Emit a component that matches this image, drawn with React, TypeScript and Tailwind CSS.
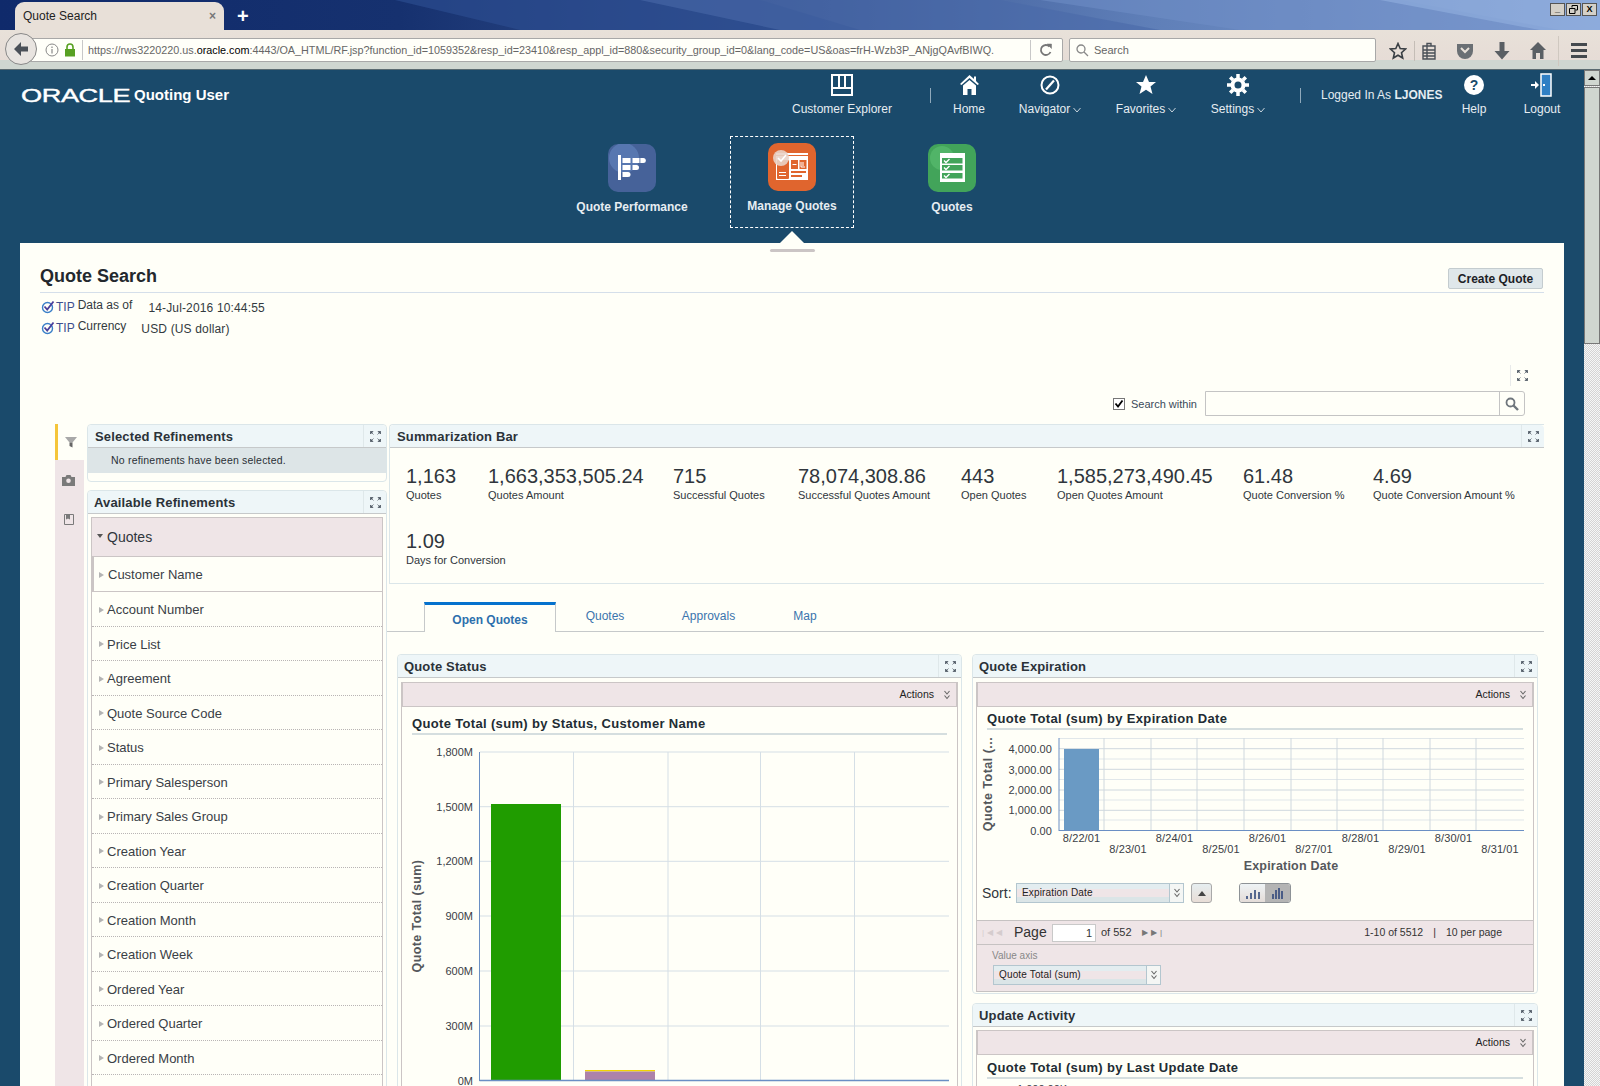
import type { ReactNode } from "react";

const metricsRow = [
  { value: "1,163", label: "Quotes", width: "w-[82px]" },
  { value: "1,663,353,505.24", label: "Quotes Amount", width: "w-[185px]" },
  { value: "715", label: "Successful Quotes", width: "w-[125px]" },
  { value: "78,074,308.86", label: "Successful Quotes Amount", width: "w-[163px]" },
  { value: "443", label: "Open Quotes", width: "w-[96px]" },
  { value: "1,585,273,490.45", label: "Open Quotes Amount", width: "w-[186px]" },
  { value: "61.48", label: "Quote Conversion %", width: "w-[130px]" },
  { value: "4.69", label: "Quote Conversion Amount %", width: "w-[166px]" },
  { value: "1.09", label: "Days for Conversion", width: "w-[200px]" },
];

const refinements = [
  "Account Number",
  "Price List",
  "Agreement",
  "Quote Source Code",
  "Status",
  "Primary Salesperson",
  "Primary Sales Group",
  "Creation Year",
  "Creation Quarter",
  "Creation Month",
  "Creation Week",
  "Ordered Year",
  "Ordered Quarter",
  "Ordered Month",
];

function ExpandIcon() {
  return (
    <svg width="11" height="11" viewBox="0 0 11 11" fill="#4a5560" stroke="#4a5560" strokeWidth="0.7">
      <path d="M0.5 0.5H3L0.5 3ZM0.5 0.5L3.500 3.500M10.500 0.500H8L10.500 3ZM10.500 0.500L7.500 3.500M0.500 10.500H3L0.500 8ZM0.500 10.500L3.500 7.500M10.500 10.500H8L10.500 8ZM10.500 10.500L7.500 7.500" />
    </svg>
  );
}

function DoubleChevron() {
  return (
    <svg width="8" height="10" viewBox="0 0 8 10" fill="none" stroke="#666" strokeWidth="1.1">
      <path d="M1.500 1L4 4L6.500 1M1.500 5.500L4 8.500L6.500 5.500" />
    </svg>
  );
}

function SmallChevron() {
  return (
    <svg width="8" height="6" viewBox="0 0 8 6" fill="none" stroke="#c8d4dc" strokeWidth="1" className="ml-[3px] mt-[5px]">
      <path d="M0.5 1L4 5L7.5 1" />
    </svg>
  );
}

function TipIcon() {
  return (
    <svg width="14" height="14" viewBox="0 0 14 14" fill="none">
      <circle cx="6.5" cy="7.5" r="5" stroke="#3a7fc8" strokeWidth="1.4" />
      <path d="M3.5 6.5L6.2 9.5L12.5 1.5" stroke="#4a3f9a" strokeWidth="1.8" />
    </svg>
  );
}

function NavItem({ icon, label, width, chevron }: { icon: ReactNode; label: string; width: string; chevron?: boolean }) {
  return (
    <div className={`${width} flex flex-col items-center`}>
      <div className="h-[28px] flex items-center justify-center">{icon}</div>
      <div className="flex items-start mt-[3px] text-[12px] leading-[14px] text-[#e6edf2] whitespace-nowrap">
        {label}
        {chevron && <SmallChevron />}
      </div>
    </div>
  );
}

function PanelHeader({ title, titleClass }: { title: string; titleClass?: string }) {
  return (
    <div className="h-[23px] flex items-center justify-between bg-[#eef6f8] border-b border-[#c6c9ca] rounded-t-[4px]">
      <span className={`text-[13px] font-bold tracking-[0.15px] text-[#2b3238] whitespace-nowrap pt-px ${titleClass ?? "pl-[7px]"}`}>{title}</span>
      <div className="w-[23px] h-[22px] border-l border-[#dfe8ea] flex items-center justify-center">
        <ExpandIcon />
      </div>
    </div>
  );
}

function ActionsBar() {
  return (
    <div className="h-[25px] bg-[#efe5e7] border border-[#cbc5c5] flex items-center justify-end pr-[5px] gap-[9px] text-[10.5px] text-[#222]">
      <span>Actions</span>
      <DoubleChevron />
    </div>
  );
}

function ChartTitle({ title, mt }: { title: string; mt: string }) {
  return (
    <div className={`mx-[10px] ${mt} border-b-2 border-[#d5dedf] text-[13px] leading-[16px] font-bold tracking-[0.34px] text-[#222c33] whitespace-nowrap pb-[1px]`}>
      {title}
    </div>
  );
}

function SelectBox({ text, width }: { text: string; width: string }) {
  return (
    <div className={`${width} h-[20px] border border-[#b3c6cf] flex bg-[linear-gradient(#e3edf0_0%,#e3edf0_30%,#efe5e7_30%,#efe5e7_70%,#dbe5e7_70%)]`}>
      <span className="flex-1 pl-[5px] text-[10px] tracking-[0.15px] leading-[18px] text-[#222]">{text}</span>
      <div className="w-[14px] border-l border-[#b3c6cf] bg-[#f4f6f4] flex items-center justify-center">
        <DoubleChevron />
      </div>
    </div>
  );
}

function QuoteStatusChart() {
  const rows = [
    { y: 752, label: "1,800M" },
    { y: 806.7, label: "1,500M" },
    { y: 861.3, label: "1,200M" },
    { y: 916, label: "900M" },
    { y: 971, label: "600M" },
    { y: 1026, label: "300M" },
    { y: 1080.5, label: "0M" },
  ];
  return (
    <svg viewBox="402 735 555 351" width="555" height="351" className="block" fontFamily="Liberation Sans" fontSize="11">
      {rows.map((r) => (
        <g key={r.y}>
          <line x1="480" x2="949" y1={r.y} y2={r.y} stroke="#d5dfe6" />
          <text x="473" y={r.y + 4} textAnchor="end" fill="#3a4046">
            {r.label}
          </text>
        </g>
      ))}
      {[573.5, 668, 760.5, 854.5].map((x) => (
        <line key={x} x1={x} x2={x} y1="752" y2="1080" stroke="#d5dfe6" />
      ))}
      <rect x="491" y="804" width="70" height="276" fill="#209c00" />
      <rect x="585" y="1070" width="70" height="1.5" fill="#f2d400" />
      <rect x="585" y="1071.5" width="70" height="9" fill="#ad82a9" />
      <line x1="479.5" x2="479.5" y1="752" y2="1081" stroke="#6a8fc4" />
      <line x1="479.5" x2="949" y1="1080.5" y2="1080.5" stroke="#6a8fc4" strokeWidth="1.5" />
      <text transform="translate(421 916) rotate(-90)" textAnchor="middle" fontWeight="bold" fontSize="12.500" letterSpacing="0.4" fill="#55585c">
        Quote Total (sum)
      </text>
    </svg>
  );
}

function ExpirationChart() {
  const xs = [1104, 1151, 1197, 1244, 1291, 1337, 1383, 1430, 1476];
  const ys = [748.7, 769.3, 790, 810.3];
  const minor = [738.5, 759, 779.5, 800, 820];
  const labels = ["8/22/01", "8/23/01", "8/24/01", "8/25/01", "8/26/01", "8/27/01", "8/28/01", "8/29/01", "8/30/01", "8/31/01"];
  return (
    <svg viewBox="977 730 556 146" width="556" height="146" className="block" fontFamily="Liberation Sans" fontSize="11">
      {minor.map((y) => (
        <line key={y} x1="1059" x2="1524" y1={y} y2={y} stroke="#e1e7ea" />
      ))}
      {ys.map((y) => (
        <line key={y} x1="1059" x2="1524" y1={y} y2={y} stroke="#cfd8de" />
      ))}
      {xs.map((x) => (
        <line key={x} x1={x} x2={x} y1="738" y2="830" stroke="#cfd8de" />
      ))}
      {[
        ["4,000.00", 749],
        ["3,000.00", 769.5],
        ["2,000.00", 790],
        ["1,000.00", 810],
        ["0.00", 831],
      ].map(([t, y]) => (
        <text key={t} x="1052" y={Number(y) + 4} textAnchor="end" letterSpacing="0.1" fill="#3a4046">
          {t}
        </text>
      ))}
      <rect x="1064" y="749" width="35" height="81" fill="#6a9ac4" />
      <line x1="1059" x2="1059" y1="738" y2="831" stroke="#6a8fc4" />
      <line x1="1059" x2="1524" y1="830.5" y2="830.5" stroke="#6a8fc4" />
      {labels.map((t, i) => (
        <text key={t} x={1081.5 + i * 46.5} y={i % 2 === 0 ? 842 : 853} textAnchor="middle" letterSpacing="0.1" fill="#3a4046">
          {t}
        </text>
      ))}
      <text x="1291" y="870" textAnchor="middle" fontWeight="bold" fontSize="12.500" letterSpacing="0.2" fill="#55585c">
        Expiration Date
      </text>
      <text transform="translate(992 784) rotate(-90)" textAnchor="middle" fontWeight="bold" fontSize="12.500" letterSpacing="0.5" fill="#55585c">
        Quote Total (...
      </text>
    </svg>
  );
}

function PerformanceIcon() {
  return (
    <svg width="48" height="48" viewBox="0 0 48 48">
      <rect width="48" height="48" rx="10" fill="#466299" />
      <circle cx="16" cy="14" r="15" fill="#5d7fb8" opacity="0.75" />
      <rect x="10" y="11" width="3" height="25" fill="#fff" />
      <rect x="14.5" y="14" width="8" height="5" fill="#fff" />
      <rect x="24.5" y="14" width="7" height="5" fill="#fff" />
      <path d="M32.3 14h3a2.5 2.5 0 010 5h-3z" fill="#fff" />
      <rect x="14.5" y="21" width="8" height="5" fill="#fff" />
      <path d="M24.5 21h4a2.5 2.5 0 010 5h-4z" fill="#fff" />
      <path d="M14.5 28h5.5a2.5 2.5 0 010 5h-5.5z" fill="#fff" />
    </svg>
  );
}

function ManageIcon() {
  return (
    <svg width="48" height="48" viewBox="0 0 48 48">
      <rect width="48" height="48" rx="10" fill="#e0652e" />
      <rect x="8" y="10" width="32" height="27" fill="#fff" />
      <rect x="8" y="12" width="32" height="1" fill="#e0652e" />
      <rect x="9" y="17" width="12" height="19" rx="1" fill="#e0652e" />
      <rect x="23" y="17" width="7" height="9" fill="#e0652e" />
      <rect x="31.5" y="17" width="7" height="9" fill="#e0652e" />
      <rect x="24.5" y="21" width="4" height="1" fill="#fff" />
      <path d="M33 19v5h4M35 19v4" stroke="#fff" fill="none" />
      <rect x="23" y="28" width="15" height="2" fill="#e0652e" />
      <rect x="23" y="32" width="11" height="2" fill="#e0652e" />
      <rect x="11" y="29" width="7" height="1" fill="#fff" />
      <rect x="11" y="32" width="7" height="1" fill="#fff" />
      <circle cx="13" cy="15" r="8" fill="#e9d3c8" opacity="0.9" />
      <path d="M10 15l3 3 5-6" stroke="#fff" strokeWidth="1.6" fill="none" />
    </svg>
  );
}

function QuotesIcon() {
  return (
    <svg width="48" height="48" viewBox="0 0 48 48">
      <rect width="48" height="48" rx="10" fill="#42a45a" />
      <circle cx="14" cy="14" r="12" fill="#55b86b" opacity="0.8" />
      <rect x="12" y="9" width="25" height="29" fill="#fff" />
      {[14, 21, 29].map((y) => (
        <g key={y}>
          <rect x="14" y={y} width="20.5" height="5.5" fill="#42a45a" />
          <path d={`M16 ${y + 2.5}l2 2 3.5-3.5`} stroke="#fff" strokeWidth="1.4" fill="none" />
        </g>
      ))}
    </svg>
  );
}

function BrowserChrome() {
  return (
    <>
      <div className="relative h-[30px] bg-[linear-gradient(90deg,#0f2a6b_0%,#16316f_25%,#3c5a98_52%,#5f7fb8_72%,#86a3d6_100%)] overflow-hidden">
        <svg className="absolute inset-0" width="1600" height="30" viewBox="0 0 1600 30">
          <path d="M395 0H760L860 30H520Z" fill="#2b4b8e" opacity="0.7" />
          <path d="M640 0H1000L1160 30H780Z" fill="#4a69a8" opacity="0.6" />
          <path d="M1040 0H1400L1560 30H1240Z" fill="#6f8ec6" opacity="0.55" />
          <path d="M1380 0H1600V30H1540Z" fill="#92b0e0" opacity="0.6" />
        </svg>
        <div className="relative flex items-end h-full pl-[15px]">
          <div className="w-[209px] h-[28px] rounded-t-[9px] bg-[#e8e0d8] flex items-center justify-between pl-[8px] pr-[8px] text-[12px] text-[#222]">
            <span>Quote Search</span>
            <span className="text-[12px] font-bold text-[#777]">×</span>
          </div>
          <span className="ml-[13px] mb-[4px] text-[20px] leading-[20px] font-bold text-white">+</span>
          <div className="ml-auto self-start mt-[3px] mr-[3px] flex gap-[1px]">
            {["_", "🗗", "X"].map((b) => (
              <div key={b} className="w-[15px] h-[13px] bg-[#d4d0c8] border border-[#555] text-[9px] leading-[11px] text-center font-bold text-black">
                {b === "🗗" ? (
                  <svg width="9" height="9" viewBox="0 0 9 9" className="mx-auto mt-[1px]" fill="none" stroke="#000">
                    <path d="M3 2.5V0.5H8.5V5H6.5M0.5 3.5H6V8.5H0.5Z" />
                  </svg>
                ) : (
                  b
                )}
              </div>
            ))}
          </div>
        </div>
      </div>
      <div className="h-[40px] flex items-start pl-[5px] bg-[linear-gradient(#e8e1d9_0%,#e6dcd6_78%,#cfd6d0_78%,#cfd6d0_100%)] border-b border-[#5a6a70]">
        <div className="relative z-10 mt-[3px] w-[32px] h-[32px] rounded-full bg-[#e8e4e0] border border-[#888] flex items-center justify-center">
          <svg width="16" height="16" viewBox="0 0 16 16" fill="#4a5058">
            <path d="M8 1L1 8L8 15V10.5H15V5.5H8Z" />
          </svg>
        </div>
        <div className="-ml-[7px] mt-[8px] w-[1033px] h-[24px] bg-[#fffff9] border border-[#a8a8a8] rounded-r-[2px] flex items-center pl-[14px]">
          <svg width="14" height="14" viewBox="0 0 14 14" fill="none" stroke="#888">
            <circle cx="7" cy="7" r="6" />
            <path d="M7 6V10.5M7 3.5V5" strokeWidth="1.2" />
          </svg>
          <svg width="12" height="14" viewBox="0 0 12 14" className="ml-[5px]" fill="#57a020">
            <path d="M1 6H11V13.5H1Z" />
            <path d="M3 6V4a3 3 0 016 0v2" fill="none" stroke="#57a020" strokeWidth="1.6" />
          </svg>
          <div className="w-px h-[20px] bg-[#c8c8c8] ml-[6px]" />
          <span className="ml-[5px] w-[942px] pt-px text-[10.8px] text-[#666] whitespace-nowrap overflow-hidden">
            https://rws3220220.us.<span className="text-black">oracle.com</span>:4443/OA_HTML/RF.jsp?function_id=1059352&amp;resp_id=23410&amp;resp_appl_id=880&amp;security_group_id=0&amp;lang_code=US&amp;oas=frH-Wzb3P_ANjgQAvfBIWQ.
          </span>
          <div className="w-px h-[20px] bg-[#c8c8c8]" />
          <svg width="14" height="14" viewBox="0 0 14 14" className="ml-[8px]" fill="none" stroke="#777" strokeWidth="1.8">
            <path d="M11.5 9A5 5 0 1110.5 3.5" />
            <path d="M8 1H12.5V5.5Z" fill="#777" strokeWidth="0.5" />
          </svg>
        </div>
        <div className="ml-[6px] mt-[8px] w-[307px] h-[24px] bg-[#fffff9] border border-[#a8a8a8] rounded-[2px] flex items-center pl-[6px] text-[11px] text-[#666]">
          <svg width="13" height="13" viewBox="0 0 13 13" fill="none" stroke="#888" strokeWidth="1.3">
            <circle cx="5" cy="5" r="4" />
            <path d="M8 8L12 12" />
          </svg>
          <span className="ml-[5px] pt-px">Search</span>
        </div>
        <div className="flex items-center h-[40px] pt-[1px]">
          <svg width="18" height="18" viewBox="0 0 18 18" className="ml-[13px]" fill="none" stroke="#3a3f44" strokeWidth="1.6">
            <path d="M9 1.5L11.2 6.5L16.5 7L12.5 10.7L13.7 16L9 13.2L4.3 16L5.5 10.7L1.5 7L6.800 6.500Z" />
          </svg>
          <div className="ml-[7px] w-px h-[20px] bg-[#c4bdb6]" />
          <svg width="14" height="18" viewBox="0 0 14 18" className="ml-[7px]" fill="none" stroke="#4a5058" strokeWidth="1.4">
            <path d="M1 4H13V17H1ZM5 4V1.500H9V4M1 8H13M1 11H13M1 14H13M5 4V17" />
          </svg>
          <svg width="18" height="16" viewBox="0 0 18 16" className="ml-[20px]" fill="#6a6f74">
            <path d="M1 1H17V8A8 8 0 011 8Z" />
            <path d="M5 5L9 9L13 5" fill="none" stroke="#e8e1d9" strokeWidth="2" />
          </svg>
          <svg width="16" height="18" viewBox="0 0 16 18" className="ml-[20px]" fill="#5a5f64">
            <path d="M5.500 0H10.500V9H15.500L8 17.500L0.500 9H5.500Z" />
          </svg>
          <svg width="16" height="17" viewBox="0 0 16 17" className="ml-[20px]" fill="#5a5f64">
            <path d="M8 0L16 8H13.500V17H10V11H6V17H2.500V8H0Z" />
          </svg>
          <div className="ml-[12px] w-px h-[30px] bg-[#cfc8c0]" />
          <div className="ml-[12px] w-[16px] flex flex-col gap-[3px]">
            <div className="h-[3px] bg-[#44494e]" />
            <div className="h-[3px] bg-[#44494e]" />
            <div className="h-[3px] bg-[#44494e]" />
          </div>
        </div>
      </div>
    </>
  );
}

function AppHeader() {
  return (
    <div className="bg-[#1a4a6b] h-[173px] shrink-0">
      <div className="h-[66px] flex items-start">
        <div className="w-[777px] flex items-center pl-[21px] pt-[14px] text-white">
          <span className="w-[113px] origin-left scale-x-[1.43] text-[19px] leading-[19px] tracking-[-0.3px] [-webkit-text-stroke:0.4px_white]">ORACLE</span>
          <span className="text-[15px] font-bold">Quoting User</span>
        </div>
        <div className="flex items-start pt-[1px]">
          <NavItem
            width="w-[130px]"
            label="Customer Explorer"
            icon={
              <svg width="22" height="22" viewBox="0 0 22 22" fill="none" stroke="#fff" strokeWidth="2">
                <path d="M1 1H21V21H1ZM8 1V14H21M14 1V14M1 14H8" />
              </svg>
            }
          />
          <div className="ml-[23px] mt-[17px] w-px h-[15px] bg-[#8fa9bb]" />
          <div className="ml-[7px]" />
          <NavItem
            width="w-[62px]"
            label="Home"
            icon={
              <svg width="19" height="20" viewBox="0 0 19 20" fill="#fff">
                <path d="M9.500 0L14 4V1.500H16V6L19 9L17.500 10L9.500 3L1.500 10L0 9Z" />
                <path d="M9.500 5L16 10.500V20H11.500V14H7.500V20H3V10.500Z" />
              </svg>
            }
          />
          <NavItem
            width="w-[100px]"
            label="Navigator"
            chevron
            icon={
              <svg width="20" height="20" viewBox="0 0 20 20" fill="none" stroke="#fff" strokeWidth="2">
                <circle cx="10" cy="10" r="8.500" />
                <path d="M14 5.500L6 14.500" strokeWidth="2.200" />
              </svg>
            }
          />
          <NavItem
            width="w-[92px]"
            label="Favorites"
            chevron
            icon={
              <svg width="20" height="20" viewBox="0 0 20 20" fill="#fff">
                <path d="M10 0L13 7H20L14.500 11.500L16.500 19L10 14.800L3.500 19L5.500 11.500L0 7H7Z" />
              </svg>
            }
          />
          <NavItem
            width="w-[92px]"
            label="Settings"
            chevron
            icon={
              <svg width="22" height="22" viewBox="0 0 22 22" fill="none" stroke="#fff">
                <circle cx="11" cy="11" r="5.500" strokeWidth="4" />
                <path d="M11 0V4M11 18V22M0 11H4M18 11H22M3.200 3.200L6 6M16 16L18.800 18.800M18.800 3.200L16 6M6 16L3.200 18.800" strokeWidth="3.500" />
              </svg>
            }
          />
          <div className="ml-[16px] mt-[17px] w-px h-[15px] bg-[#8fa9bb]" />
          <div className="ml-[20px] mt-[17px] w-[123px] text-[12px] leading-[14px] text-[#e6edf2] whitespace-nowrap">
            Logged In As <span className="font-bold">LJONES</span>
          </div>
          <NavItem
            width="w-[60px]"
            label="Help"
            icon={
              <svg width="20" height="20" viewBox="0 0 20 20">
                <circle cx="10" cy="10" r="10" fill="#fff" />
                <text x="10" y="15" textAnchor="middle" fontSize="14" fontWeight="bold" fontFamily="Liberation Sans" fill="#1a4a6b">
                  ?
                </text>
              </svg>
            }
          />
          <NavItem
            width="w-[76px]"
            label="Logout"
            icon={
              <svg width="22" height="24" viewBox="0 0 22 24">
                <path d="M10 1H20V23H10Z" fill="#2f7fc4" stroke="#fff" strokeWidth="1.500" />
                <path d="M0 11H4V8L8 12L4 16V13H0Z" fill="#fff" />
                <rect x="12" y="11" width="2" height="2" fill="#fff" />
              </svg>
            }
          />
        </div>
      </div>
      <div className="relative h-[107px] flex pl-[552px] text-[12px] font-bold text-[#e6edf2] text-center">
        <div className="w-[160px] pt-[8px] flex flex-col items-center">
          <PerformanceIcon />
          <span className="mt-[6px]">Quote Performance</span>
        </div>
        <div className="w-[160px] flex justify-center">
          <div className="w-[124px] h-[92px] border border-dashed border-white pt-[6px] flex flex-col items-center">
            <ManageIcon />
            <span className="mt-[6px]">Manage Quotes</span>
          </div>
        </div>
        <div className="w-[160px] pt-[8px] flex flex-col items-center">
          <QuotesIcon />
          <span className="mt-[6px]">Quotes</span>
        </div>
        <div className="absolute left-[780px] bottom-0 w-0 h-0 border-l-[12px] border-r-[12px] border-b-[12px] border-l-transparent border-r-transparent border-b-[#fffff8]" />
      </div>
    </div>
  );
}

function RefinementsColumn() {
  return (
    <div className="w-[300px] shrink-0">
      <div className="h-[58px] border border-[#dbe6e9] rounded-[4px]">
        <PanelHeader title="Selected Refinements" />
        <div className="h-[25px] bg-[#dde5e7] pl-[23px] text-[10.5px] leading-[24px] tracking-[0.2px] text-[#2a3036]">
          No refinements have been selected.
        </div>
      </div>
      <div className="mt-[8px] border border-[#dbe6e9] rounded-t-[4px]">
        <PanelHeader title="Available Refinements" titleClass="pl-[6px]" />
        <div className="mx-[3px] mt-[3px]">
          <div className="h-[40px] pt-px bg-[#efe5e7] border border-[#cbc5c5] flex items-center pl-[5px] text-[14px] text-[#30363c]">
            <span className="w-0 h-0 border-l-[3.500px] border-r-[3.500px] border-t-[4px] border-l-transparent border-r-transparent border-t-[#555] mr-[4px] mb-[3px]" />
            Quotes
          </div>
          <div className="border-x border-[#cbc5c5]">
            <div className="h-[35px] pt-[2px] flex items-center pl-[5px] text-[13px] text-[#3a4046] border-b border-[#cbc5c5] border-l-2">
              <span className="w-0 h-0 border-t-[3.500px] border-b-[3.500px] border-l-[5px] border-t-transparent border-b-transparent border-l-[#b4b4b4] mr-[4px]" />
              Customer Name
            </div>
            {refinements.map((name) => (
              <div key={name} className="h-[34.5px] pt-[2px] flex items-center pl-[7px] text-[13px] text-[#3a4046] border-b border-dotted border-[#b9b5b5]">
                <span className="w-0 h-0 border-t-[3.500px] border-b-[3.500px] border-l-[5px] border-t-transparent border-b-transparent border-l-[#b4b4b4] mr-[3px]" />
                {name}
              </div>
            ))}
            <div className="h-[14px]" />
          </div>
        </div>
      </div>
    </div>
  );
}

function SideRail() {
  return (
    <div className="w-[29px] h-[700px] shrink-0 mr-[3px] bg-[#efe5e7]">
      <div className="h-[36px] bg-[#fffff8] border-l-[3px] border-[#f5c53a] flex items-center justify-center pr-[1px]">
        <svg width="12" height="12" viewBox="0 0 12 12">
          <path d="M0 1H12L7.500 6.500H4.500Z" fill="#a8a8a8" />
          <path d="M4.500 6.500H7.500V11.500L4.500 10Z" fill="#666" />
        </svg>
      </div>
      <div className="h-[40px] flex items-center justify-center pr-[2px]">
        <svg width="13" height="11" viewBox="0 0 13 11" fill="#7a7a7a">
          <path d="M0 2H3.500L4.500 0H8.500L9.500 2H13V11H0ZM6.500 3.500A2.300 2.300 0 106.500 8.100A2.300 2.300 0 106.500 3.500Z" />
        </svg>
      </div>
      <div className="h-[38px] flex items-center justify-center pr-[2px]">
        <svg width="10" height="11" viewBox="0 0 10 11" fill="none" stroke="#7a7a7a">
          <path d="M0.500 0.500H9.500V10.500H0.500Z" />
          <path d="M2.500 0.500V5L4 3.800L5.500 5V0.500Z" fill="#7a7a7a" />
        </svg>
      </div>
    </div>
  );
}

function SummarizationBar() {
  return (
    <div className="h-[160px] border border-r-0 border-[#dbe6e9] rounded-tl-[4px]">
      <PanelHeader title="Summarization Bar" />
      <div className="flex flex-wrap pl-[16px] pt-[16px]">
        {metricsRow.map((m) => (
          <div key={m.label} className={`${m.width} h-[65px] shrink-0 text-[#30363c]`}>
            <div className="text-[20px] leading-[24px] whitespace-nowrap">{m.value}</div>
            <div className="text-[11px] leading-[14px] whitespace-nowrap">{m.label}</div>
          </div>
        ))}
      </div>
    </div>
  );
}

function Tabs() {
  return (
    <div className="-ml-[2px] h-[48px] flex items-end border-b border-[#c6c9ca] pl-[37px] text-[12px] text-[#3a74ad]">
      <div className="w-[132px] h-[30px] -mb-px bg-[#fffff8] border-x border-[#c6c9ca] border-t-[3px] border-t-[#0572ce] flex items-center justify-center font-bold pt-[3px] text-[#2d70ad]">
        Open Quotes
      </div>
      <div className="h-[30px] flex items-center">
        <span className="w-[98px] text-center">Quotes</span>
        <span className="w-[109px] text-center">Approvals</span>
        <span className="w-[84px] text-center">Map</span>
      </div>
    </div>
  );
}

function QuoteStatusPanel() {
  return (
    <div className="w-[565px] shrink-0 border border-[#dbe6e9] rounded-t-[4px]">
      <PanelHeader title="Quote  Status" titleClass="pl-[6px]" />
      <div className="mx-[3px] mt-[4px] border-x border-[#cbc5c5]">
        <ActionsBar />
        <ChartTitle title="Quote Total (sum) by Status, Customer Name" mt="mt-[9px]" />
        <QuoteStatusChart />
      </div>
    </div>
  );
}

function ExpirationPanel() {
  return (
    <div className="h-[340px] border border-[#dbe6e9] rounded-[4px]">
      <PanelHeader title="Quote Expiration" titleClass="pl-[6px]" />
      <div className="mx-[3px] mt-[4px] border-x border-[#cbc5c5]">
        <ActionsBar />
        <ChartTitle title="Quote Total (sum) by Expiration Date" mt="mt-[4px]" />
        <ExpirationChart />
        <div className="h-[44px] flex items-start pl-[5px] pt-[7px]">
          <span className="text-[14px] leading-[20px] text-[#30363c] w-[34px]">Sort:</span>
          <SelectBox text="Expiration Date" width="w-[168px]" />
          <div className="ml-[7px] w-[21px] h-[20px] border border-[#a9a9a9] rounded-[3px] bg-[linear-gradient(#e6eef0,#e8ddd6)] flex items-center justify-center">
            <span className="w-0 h-0 border-l-[4px] border-r-[4px] border-b-[5px] border-l-transparent border-r-transparent border-b-[#444]" />
          </div>
          <div className="ml-[27px] w-[52px] h-[20px] border border-[#8d9296] rounded-[3px] flex overflow-hidden">
            <div className="flex-1 bg-[linear-gradient(#eef3f5,#e4dcd8)] flex items-end justify-center pb-[3px] gap-[2px]">
              <span className="w-[2px] h-[3px] bg-[#55678f]" />
              <span className="w-[2px] h-[6px] bg-[#55678f]" />
              <span className="w-[2px] h-[9px] bg-[#55678f]" />
              <span className="w-[2px] h-[7px] bg-[#55678f]" />
            </div>
            <div className="flex-1 bg-[#b4b4b4] flex items-end justify-center pb-[3px] gap-[1px]">
              <span className="w-[2px] h-[5px] bg-[#4a5c86]" />
              <span className="w-[2px] h-[9px] bg-[#4a5c86]" />
              <span className="w-[2px] h-[11px] bg-[#4a5c86]" />
              <span className="w-[2px] h-[8px] bg-[#4a5c86]" />
            </div>
          </div>
        </div>
        <div className="h-[25px] bg-[#efe5e7] border-y border-[#c6c2c2] flex items-center pl-[5px] text-[10.5px] text-[#333]">
          <span className="w-[32px] text-[#d5ccce] text-[8px] tracking-[3px]">|◀◀</span>
          <span className="text-[14px] w-[38px]">Page</span>
          <div className="w-[44px] h-[18px] bg-white border border-[#c9c9c9] text-right pr-[3px] text-[11px] leading-[16px]">1</div>
          <span className="ml-[5px] w-[38px] text-[11px]">of 552</span>
          <span className="ml-[3px] text-[#777] text-[8px] tracking-[3px]">▶▶|</span>
          <span className="ml-auto whitespace-nowrap">1-10 of 5512</span>
          <span className="mx-[10px]">|</span>
          <span className="mr-[31px] whitespace-nowrap">10 per page</span>
        </div>
        <div className="h-[47px] bg-[#efe5e7] border-b border-[#c6c2c2] pl-[15px] pt-[4px]">
          <div className="text-[10px] leading-[14px] text-[#888]">Value axis</div>
          <div className="mt-[2px] ml-[1px]">
            <SelectBox text="Quote Total (sum)" width="w-[168px]" />
          </div>
        </div>
      </div>
    </div>
  );
}

function UpdateActivityPanel() {
  return (
    <div className="mt-[9px] border border-[#dbe6e9] rounded-t-[4px]">
      <PanelHeader title="Update Activity" titleClass="pl-[6px]" />
      <div className="mx-[3px] mt-[3px] border-x border-[#cbc5c5]">
        <ActionsBar />
        <ChartTitle title="Quote Total (sum) by Last Update Date" mt="mt-[5px]" />
        <div className="pl-[40px] pt-[2px] text-[11px] text-[#3a4046]">1,000.00K</div>
      </div>
    </div>
  );
}

export default function App() {
  return (
    <div className="w-[1600px] h-[1086px] overflow-hidden flex flex-col font-['Liberation_Sans',Arial,sans-serif] bg-[#1a4a6b]">
      <BrowserChrome />
      <div className="flex flex-1 min-h-0">
        <div className="w-[1584px] flex flex-col min-h-0">
          <AppHeader />
          <div className="ml-[20px] w-[1544px] flex-1 min-h-0 bg-[#fffff8] relative">
            <div className="absolute left-[750px] top-[6px] w-[45px] h-[3px] rounded-full bg-[#cbc5c5]" />
            <div className="mx-[20px] h-[50px] border-b border-[#d5dfea] flex items-start justify-between">
              <h1 className="mt-[22px] text-[18px] leading-[22px] font-bold text-[#23282d]">Quote Search</h1>
              <button className="mt-[25px] mr-[1px] w-[95px] h-[21px] bg-[#dfe7ea] border border-[#c4cccf] rounded-[2px] text-[12px] font-bold text-[#1c2126]">
                Create Quote
              </button>
            </div>
            <div className="pl-[21px] pt-[3px] text-[12px] text-[#333a40]">
              <div className="h-[21px] flex items-center">
                <TipIcon />
                <span className="ml-px font-medium text-[#3d4f8f]">TIP</span>
                <span className="ml-[3px] -translate-y-[2px]">Data as of</span>
                <span className="ml-[16px] translate-y-[1px] tracking-[0.15px]">14-Jul-2016 10:44:55</span>
              </div>
              <div className="h-[21px] flex items-center">
                <TipIcon />
                <span className="ml-px font-medium text-[#3d4f8f]">TIP</span>
                <span className="ml-[3px] -translate-y-[2px]">Currency</span>
                <span className="ml-[15px] translate-y-[1px] tracking-[0.15px]">USD (US dollar)</span>
              </div>
            </div>
            <div className="h-[21px] mt-[27px] flex justify-end pr-[32px]">
              <div className="w-[22px] border-l border-[#e8eaea] flex items-center justify-center pl-[2px]">
                <ExpandIcon />
              </div>
            </div>
            <div className="mt-[5px] h-[25px] flex items-center justify-end pr-[39px] text-[11px] text-[#3a4a5a]">
              <div className="w-[12px] h-[12px] border border-[#777] bg-[#fff] flex items-center justify-center">
                <svg width="10" height="10" viewBox="0 0 10 10" fill="none" stroke="#000" strokeWidth="1.800">
                  <path d="M1.500 4.500L4 7.500L8.500 1.500" />
                </svg>
              </div>
              <span className="ml-[6px] mr-[8px] mt-[2px]">Search within</span>
              <div className="w-[320px] h-[25px] border border-[#c4c4c4] rounded-r-[3px] flex justify-end">
                <div className="w-[25px] border-l border-[#c4c4c4] flex items-center justify-center">
                  <svg width="14" height="14" viewBox="0 0 14 14" fill="none" stroke="#6f767c" strokeWidth="1.800">
                    <circle cx="5.500" cy="5.500" r="4" />
                    <path d="M8.500 8.500L13 13" strokeWidth="2.400" />
                  </svg>
                </div>
              </div>
            </div>
            <div className="mt-[8px] flex items-start pl-[35px] pr-[20px]">
              <SideRail />
              <RefinementsColumn />
              <div className="ml-[2px] flex-1 min-w-0">
                <SummarizationBar />
                <Tabs />
                <div className="mt-[22px] ml-[8px] flex items-start gap-[10px]">
                  <QuoteStatusPanel />
                  <div className="w-[566px] shrink-0">
                    <ExpirationPanel />
                    <UpdateActivityPanel />
                  </div>
                </div>
              </div>
            </div>
          </div>
        </div>
        <div className="w-[16px] h-full flex flex-col bg-[repeating-conic-gradient(#d4d4d4_0_25%,#f6f6f6_0_50%)] bg-[length:2px_2px]">
          <div className="h-[16px] bg-[#d0d6d0] border border-[#777] flex items-center justify-center">
            <span className="w-0 h-0 border-l-[4px] border-r-[4px] border-b-[4px] border-l-transparent border-r-transparent border-b-black" />
          </div>
          <div className="h-[257px] mt-px bg-[#d0d6d0] border border-[#777]" />
        </div>
      </div>
    </div>
  );
}
